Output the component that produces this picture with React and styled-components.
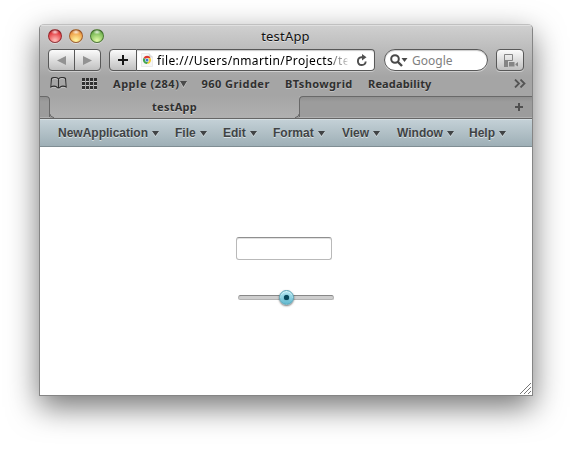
import React from "react";
import styled, { createGlobalStyle } from "styled-components";

const Global = createGlobalStyle`
  * { box-sizing: border-box; }
  body { margin: 0; background: #fff; overflow: hidden; }
`;

const Desktop = styled.div`
  width: 572px;
  height: 450px;
  padding: 24px 0 0 39px;
  background: #fff;
  font-family: "Noto Sans", "Lucida Grande", sans-serif;
`;
const Window = styled.section`
  width: 494px;
  height: 372px;
  display: flex;
  flex-direction: column;
  border: 1px solid #858585;
  border-top-color: #c0c0c0;
  border-radius: 5px 5px 0 0;
  overflow: hidden;
  background: #fff;
  box-shadow: 0 11px 31px rgba(0, 0, 0, 0.55);
`;
const Chrome = styled.header`
  height: 71px;
  flex: none;
  background: linear-gradient(#d0d0d0, #a5a5a5 52px);
  box-shadow: inset 0 1px #e0e0e0;
`;
const TitleBar = styled.div`
  height: 24px;
  display: grid;
  grid-template-columns: 69px 1fr 70px;
  align-items: center;
`;
const Lights = styled.div`
  display: flex;
  gap: 7px;
  padding-left: 8px;
  margin-top: -2px;
`;
const tones = {
  red: ["#ffb4b0", "#e33e43", "#7b1c22"],
  amber: ["#fff09a", "#ee9f48", "#88441c"],
  green: ["#d8f6a0", "#79b955", "#355f24"],
};
const Light = styled.span`
  width: 14px;
  height: 14px;
  border-radius: 50%;
  border: 1px solid ${(p) => tones[p.$tone][2]}bb;
  background:
    radial-gradient(ellipse 4px 2.5px at 50% 17%, #fffc, #fff0),
    radial-gradient(circle at 50% 88%, ${(p) => tones[p.$tone][0]} 8%, ${(p) => tones[p.$tone][1]} 68%, ${(p) => tones[p.$tone][2]});
  box-shadow: 0 1px #ffffff70;
`;
const Title = styled.div`
  margin-top: -2px;
  text-align: center;
  font-size: 13px;
  line-height: 18px;
  letter-spacing: 0.2px;
  color: #111;
  text-shadow: 0 1px #ffffff80;
`;
const Toolbar = styled.div`
  height: 23px;
  display: flex;
  padding-left: 8px;
`;
const ButtonGroup = styled.div`
  width: ${(p) => p.$width}px;
  height: 22px;
  margin-right: ${(p) => p.$gap || 0}px;
  display: flex;
  border: 1px solid #585858;
  border-radius: ${(p) => p.$radius || "4px"};
  background: linear-gradient(#fbfbfb, #c0c0c0);
  box-shadow: 0 1px #ffffff70;
`;
const ToolButton = styled.button`
  flex: 1;
  padding: 0;
  border: 0;
  background: none;
  display: grid;
  place-items: center;
  & + & { border-left: 1px solid #585858; }
`;
const AddressField = styled.div`
  width: 238px;
  height: 22px;
  margin-right: 9px;
  padding: 0 6px 0 4px;
  display: flex;
  align-items: center;
  border: 1px solid #585858;
  border-left: 0;
  border-radius: 0 4px 4px 0;
  background: #fff;
  box-shadow: 0 1px #ffffff70, inset 0 1px 1px #0003;
`;
const Address = styled.div`
  flex: 1;
  margin: 1px 0 0 4px;
  overflow: hidden;
  white-space: nowrap;
  font-size: 12px;
  line-height: 18px;
  letter-spacing: 0.38px;
  color: #000;
  mask-image: linear-gradient(90deg, #000 174px, #0008 178px, #0004 189px, #0000 191px);
`;
const SearchField = styled.div`
  width: 104px;
  height: 22px;
  margin-right: 8px;
  padding: 1px 0 0 5px;
  display: flex;
  align-items: center;
  gap: 4px;
  border: 1px solid #585858;
  border-radius: 11px;
  background: #fff;
  box-shadow: 0 1px #ffffff70, inset 0 1px 1px #0003;
  color: #808080;
  font-size: 12px;
  line-height: 18px;
`;
const Bookmarks = styled.nav`
  height: 22px;
  display: flex;
  align-items: center;
  padding: 1px 6px 0 10px;
`;
const Bookmark = styled.span`
  width: ${(p) => p.$width}px;
  display: flex;
  align-items: center;
  gap: 1px;
  white-space: nowrap;
  font-weight: 700;
  font-size: 11px;
  line-height: 16px;
  letter-spacing: ${(p) => p.$track || 0}px;
  color: #303030;
  text-shadow: 0 1px #ffffff50;
`;
const IconSlot = styled.span`
  width: ${(p) => p.$width}px;
  display: flex;
`;
const Push = styled.span`
  margin-left: auto;
  display: flex;
`;
const TabStrip = styled.div`
  height: 23px;
  flex: none;
  display: flex;
  background: #b0b0b0;
  border-bottom: 1px solid #666;
`;
const TabGutter = styled.div`
  width: ${(p) => p.$width || "auto"};
  flex: ${(p) => (p.$width ? "none" : 1)};
  height: 21px;
  display: flex;
  align-items: center;
  justify-content: flex-end;
  padding-right: ${(p) => (p.$width ? 0 : "9px")};
  border-top: 1px solid #696969;
  border-${(p) => p.$side}: 1px solid #696969;
  border-radius: ${(p) => (p.$side === "right" ? "0 4px 0 0" : "4px 0 0 0")};
  background: linear-gradient(#909090, #9c9c9c 5px);
`;
const ActiveTab = styled.div`
  width: 249px;
  display: flex;
  align-items: flex-end;
  justify-content: space-between;
  font-weight: 700;
  font-size: 11px;
  line-height: 22px;
  letter-spacing: 0.24px;
  color: #303030;
  background: linear-gradient(#a5a5a5, #b0b0b0);
  text-shadow: 0 1px #ffffff70;
`;
const MenuBar = styled.nav`
  height: 28px;
  flex: none;
  display: flex;
  align-items: center;
  padding: 0 0 0 18px;
  border-top: 1px solid #d5dfe3;
  border-bottom: 1px solid #7f8d93;
  background: linear-gradient(#c3d0d6, #9eafb6);
`;
const MenuItem = styled.span`
  width: ${(p) => p.$width}px;
  display: flex;
  align-items: center;
  gap: 4px;
  font: bold 12px/16px "Liberation Sans", Arial, sans-serif;
  color: #404345;
  text-shadow: 0 1px #ffffff90;
`;
const CaretIcon = styled.svg`
  flex: none;
  margin-top: 2px;
`;
const Page = styled.main`
  flex: 1;
  display: flex;
  flex-direction: column;
  padding: 90px 0 0 196px;
`;
const Input = styled.input`
  width: 96px;
  height: 23px;
  padding: 0 4px;
  border: 1px solid #b9b9b9;
  border-top-color: #8f8f8f;
  border-radius: 3px;
  outline: 0;
  box-shadow: inset 0 1px #e2e2e2;
`;
const Slider = styled.div`
  width: 96px;
  height: 15px;
  margin: 30px 0 0 2px;
  display: grid;
  place-items: center;
`;
const Track = styled.div`
  grid-area: 1 / 1;
  width: 96px;
  height: 5px;
  border: 1px solid #b3b3b3;
  border-top-color: #888;
  border-radius: 3px;
  background: #cecece;
`;
const Thumb = styled.div`
  grid-area: 1 / 1;
  width: 15px;
  height: 15px;
  margin-left: 1px;
  display: grid;
  place-items: center;
  border: 1px solid #5aa3b5;
  border-radius: 50%;
  background: linear-gradient(#b5e8f3, #62b9cf);
  box-shadow: 0 1px 2px #0008, inset 0 1px #d9f5fa;
  z-index: 1;
  &::after {
    content: "";
    width: 5px;
    height: 5px;
    border-radius: 50%;
    background: #07475b;
    box-shadow: 0 0 1px #07475b;
  }
`;
const Resize = styled.svg`
  margin: auto 1px 1px auto;
`;

const Caret = ({ w = 8, h = 5, color = "#404345" }) => (
  <CaretIcon width={w} height={h + 1}>
    <path d={`M0 1H${w}L${w / 2} ${h + 1}Z`} fill="#ffffff80" />
    <path d={`M0 0H${w}L${w / 2} ${h}Z`} fill={color} />
  </CaretIcon>
);
const Plus = ({ size, color, weight = 2 }) => (
  <svg width={size} height={size}>
    <path d={`M${size / 2} 0V${size}M0 ${size / 2}H${size}`} stroke={color} strokeWidth={weight} />
  </svg>
);
const Favicon = () => (
  <svg width="12" height="14" viewBox="0 0 12 14">
    <path d="M.5.5H8L11.5 4V13.5H.5Z" fill="#f7f7f7" stroke="#ebebeb" />
    <path d="M8 .5V4H11.5" fill="#ddd" stroke="#ccc" strokeWidth=".5" />
    <path d="M6 7L2.5 5A4 4 0 0 1 9.6 5H6Z" fill="#df3b2e" />
    <path d="M6 7L2.4 5A4 4 0 0 0 6 11L7.7 8Z" fill="#43a650" />
    <path d="M6 7L6 5H9.6A4 4 0 0 1 6 11L7.7 8Z" fill="#f5cc36" />
    <circle cx="6" cy="7" r="2" fill="#fff" />
    <circle cx="6" cy="7" r="1.5" fill="#3c78d2" />
  </svg>
);
const bookPath =
  "M8.5 10.500V2Q7.500 .5 5 .5Q2.500 .5 1.500 1.500L.8 10Q4 8.300 6.500 9.800Q7.500 11 8.500 11Q9.500 11 10.500 9.800Q13 8.300 16.200 10L15.500 1.500Q14.500 .5 12 .5Q9.500 .5 8.500 2";
const Book = () => (
  <svg width="18" height="13" fill="none">
    <path d={bookPath} transform="translate(0 1)" stroke="#fff6" />
    <path d={bookPath} stroke="#303030" strokeWidth="1.1" />
  </svg>
);
const Grid = () => (
  <svg width="16" height="12">
    {[0, 4, 8].map((y) =>
      [0, 4, 8, 12].map((x) => (
        <g key={`${x}-${y}`}>
          <rect x={x} y={y + 1} width="3" height="3" fill="#fff6" />
          <rect x={x} y={y} width="3" height="3" fill="#303030" />
        </g>
      ))
    )}
  </svg>
);
const TabFoot = ({ flip }) => (
  <svg width="4" height="4">
    <g transform={flip ? "matrix(-1 0 0 1 4 0)" : undefined}>
      <path d="M-1-1H-.5Q0 3 4 3.700V4H-1Z" fill="#9c9c9c" />
      <path d="M-.5-1Q0 3 4 3.700" fill="none" stroke="#696969" />
    </g>
  </svg>
);

const menus = [
  ["NewApplication", 117],
  ["File", 48],
  ["Edit", 50],
  ["Format", 69],
  ["View", 55],
  ["Window", 72],
  ["Help", 50],
];

export default function App() {
  return (
    <>
      <Global />
      <Desktop>
        <Window>
          <Chrome>
            <TitleBar>
              <Lights>
                <Light $tone="red" />
                <Light $tone="amber" />
                <Light $tone="green" />
              </Lights>
              <Title>testApp</Title>
            </TitleBar>
            <Toolbar>
              <ButtonGroup $width={53} $gap={8}>
                <ToolButton aria-label="Back">
                  <svg width="9" height="9"><path d="M0 4.500L9 0V9Z" fill="#929292" /></svg>
                </ToolButton>
                <ToolButton aria-label="Forward">
                  <svg width="9" height="9"><path d="M9 4.500L0 0V9Z" fill="#929292" /></svg>
                </ToolButton>
              </ButtonGroup>
              <ButtonGroup $width={28} $radius="4px 0 0 4px">
                <ToolButton aria-label="Add bookmark"><Plus size={10} color="#171717" /></ToolButton>
              </ButtonGroup>
              <AddressField>
                <Favicon />
                <Address>file:///Users/nmartin/Projects/te</Address>
                <svg width="12" height="13" fill="none">
                  <path d="M7 3.200H5.500A3.900 3.900 0 1 0 9.700 7.500" stroke="#505050" strokeWidth="1.900" />
                  <path d="M6 0L10.500 3.300L6 6.500Z" fill="#505050" />
                </svg>
              </AddressField>
              <SearchField>
                <svg width="18" height="13" fill="none">
                  <circle cx="5" cy="5" r="3.800" stroke="#484848" strokeWidth="2" />
                  <path d="M7.500 7.500L12 12" stroke="#484848" strokeWidth="2.400" />
                  <path d="M11.500 4H17.500L14.500 8Z" fill="#484848" />
                </svg>
                Google
              </SearchField>
              <ButtonGroup $width={28}>
                <ToolButton aria-label="Page tools">
                  <svg width="15" height="14" fill="none">
                    <path d="M1.500 13V1.500H9.500V7.500H2" stroke="#858585" />
                    <path d="M1 7H5V14H1ZM6 9H11.500V13.500H6ZM12.500 11L15 9V13.500L12.500 12Z" fill="#858585" />
                  </svg>
                </ToolButton>
              </ButtonGroup>
            </Toolbar>
            <Bookmarks>
              <IconSlot $width={32}><Book /></IconSlot>
              <IconSlot $width={31}><Grid /></IconSlot>
              <Bookmark $width={88.5} $track={0.53}>Apple (284)<Caret w={7} h={6} color="#4a4a4a" /></Bookmark>
              <Bookmark $width={83.5} $track={0.45}>960 Gridder</Bookmark>
              <Bookmark $width={83} $track={0.38}>BTshowgrid</Bookmark>
              <Bookmark $width={70} $track={0.16}>Readability</Bookmark>
              <Push>
                <svg width="12" height="9" fill="none">
                  <path d="M1 .5L5 4.500L1 8.500M6.500 .5L10.500 4.500L6.500 8.500" stroke="#555" strokeWidth="1.800" />
                </svg>
              </Push>
            </Bookmarks>
          </Chrome>
          <TabStrip>
            <TabGutter $width="10px" $side="right" />
            <ActiveTab>
              <TabFoot />
              testApp
              <TabFoot flip />
            </ActiveTab>
            <TabGutter $side="left">
              <Plus size={8} color="#505050" />
            </TabGutter>
          </TabStrip>
          <MenuBar>
            {menus.map(([label, width]) => (
              <MenuItem key={label} $width={width}>{label}<Caret w={7} /></MenuItem>
            ))}
          </MenuBar>
          <Page>
            <Input aria-label="Text" />
            <Slider><Track /><Thumb /></Slider>
            <Resize width="11" height="11">
              <path d="M0 11L11 0M4 11L11 4M8 11L11 8" stroke="#777" />
            </Resize>
          </Page>
        </Window>
      </Desktop>
    </>
  );
}
